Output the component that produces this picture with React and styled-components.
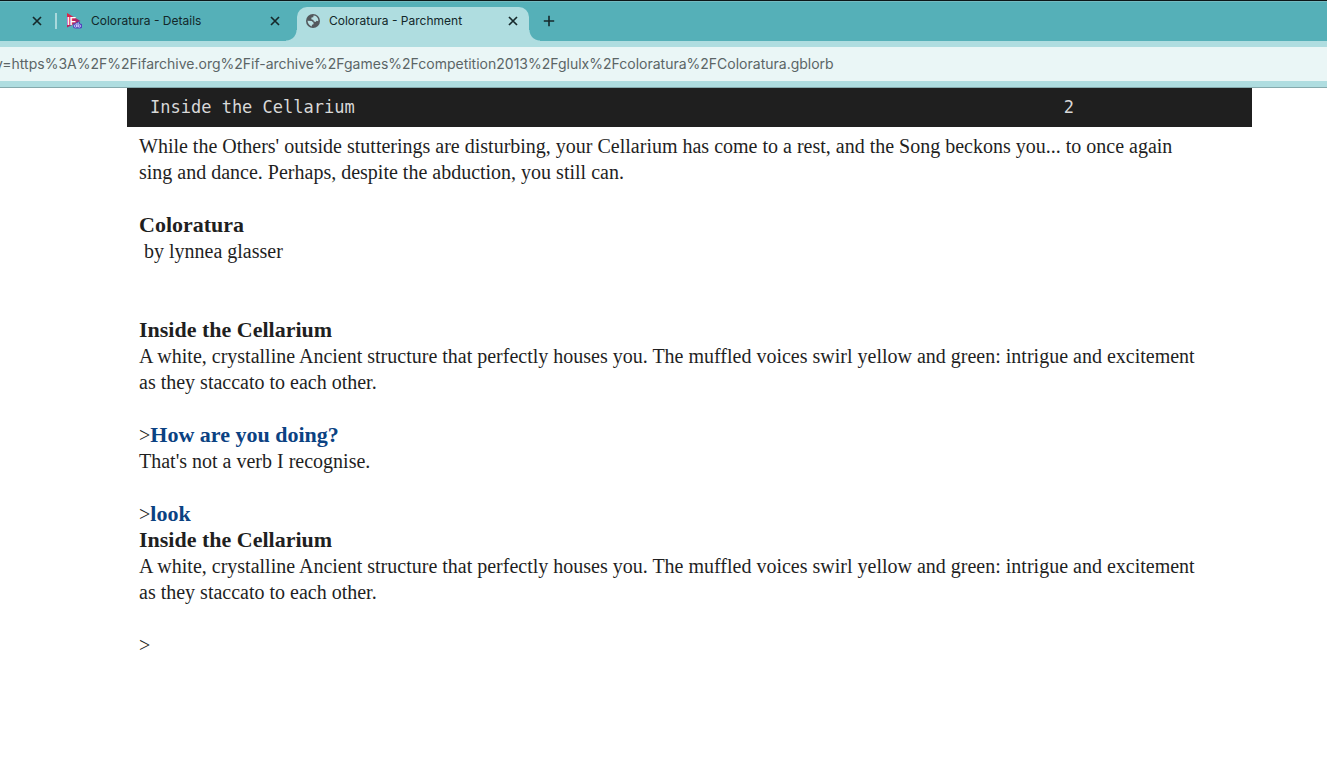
import React from "react";
import styled, { createGlobalStyle } from "styled-components";

const GlobalStyle = createGlobalStyle`
  * { box-sizing: border-box; }
  body {
    margin: 0;
    background: #fff;
    color: #1f1f1f;
    overflow-x: hidden;
  }
`;

const uiFont = `Inter, "Liberation Sans", sans-serif`;

const TabStrip = styled.header`
  display: flex;
  align-items: flex-end;
  height: 41px;
  padding-top: 6px;
  background: #55b0b8;
  border-top: 1px solid #0c1718;
  box-shadow: inset 0 1px #74bbc1;
  overflow: hidden;
  font: 12px/16px ${uiFont};
`;

const TabItem = styled.div`
  position: relative;
  display: flex;
  align-items: center;
  flex: none;
  width: ${(p) => p.$width};
  height: 34px;
  padding: 0 8px 6px 9px;
  color: #12282a;
  background: ${(p) => (p.$active ? "#afdde0" : "transparent")};
  border-radius: 10px 10px 0 0;

  &::before,
  &::after {
    content: ${(p) => (p.$active ? '""' : "none")};
    position: absolute;
    bottom: 0;
    width: 11px;
    height: 11px;
  }
  &::before {
    left: -11px;
    background: radial-gradient(circle at 0 0, transparent 10px, #afdde0 11px);
  }
  &::after {
    right: -11px;
    background: radial-gradient(circle at 100% 0, transparent 10px, #afdde0 11px);
  }
`;

const TabLink = styled.a`
  display: flex;
  align-items: center;
  gap: 9px;
  flex: 1;
  color: inherit;
  text-decoration: none;
  white-space: nowrap;
`;

const Divider = styled.span`
  flex: none;
  width: 2px;
  height: 16px;
  margin-bottom: 12px;
  background: #a9d9dc;
`;

const IconButton = styled.button`
  display: grid;
  place-items: center;
  flex: none;
  width: 16px;
  height: 16px;
  margin: ${(p) => p.$margin || 0};
  padding: 0;
  border: 0;
  background: none;
  color: #16292b;
`;

const Toolbar = styled.div`
  height: 47px;
  padding: 6px 0;
  background: #afdde0;
  border-bottom: 1px solid #85aaad;
  overflow: hidden;
`;

const AddressBar = styled.div`
  display: flex;
  height: 34px;
  background: #eaf6f6;
`;

const Address = styled.input`
  flex: 1;
  min-width: 0;
  margin-left: -5px;
  padding: 0;
  border: 0;
  outline: 0;
  background: none;
  color: #5b6566;
  font: 14px/20px ${uiFont};
`;

const Story = styled.main`
  margin: 0 75px 0 127px;
`;

const StatusLine = styled.div`
  display: flex;
  justify-content: space-between;
  padding: 6px 178px 7px 23px;
  background: #1f1f1f;
  color: #d8d8d8;
  font: 17px/26px "DejaVu Sans Mono", monospace;
`;

const Transcript = styled.div`
  display: flex;
  flex-direction: column;
  gap: 27px;
  padding: 6px 48px 12px 12px;
  font: 20px/26px "Liberation Serif", serif;
`;

const Passage = styled.p`
  margin: 0;
  margin-bottom: ${(p) => (p.$spaced ? "26px" : 0)};
  white-space: pre-wrap;
`;

const Title = styled.strong`
  display: block;
  font-size: 22px;
`;

const Command = styled.strong`
  color: #0b4282;
  font-size: 22px;
  line-height: 22px;
`;

const CommandInput = styled.input`
  flex: 1;
  min-width: 0;
  padding: 0;
  border: 0;
  outline: 0;
  background: none;
  color: #0b4282;
  font: inherit;
  font-weight: 700;
`;

const Prompt = styled.label`
  display: flex;
`;

function CloseIcon() {
  return (
    <svg width="10" height="10" viewBox="0 0 10 10" stroke="currentColor" strokeWidth="1.7">
      <path d="M1 1l8 8M9 1L1 9" />
    </svg>
  );
}

function PlusIcon() {
  return (
    <svg width="12" height="12" viewBox="0 0 12 12" stroke="currentColor" strokeWidth="1.6">
      <path d="M6 .8v10.4M.8 6h10.4" />
    </svg>
  );
}

function IfdbIcon() {
  return (
    <svg width="16" height="16" viewBox="0 0 16 16" aria-hidden="true">
      <defs>
        <linearGradient id="flag" x1="0" y1="0" x2="1" y2="1">
          <stop offset="0" stopColor="#ea2440" />
          <stop offset="0.5" stopColor="#bb2462" />
          <stop offset="1" stopColor="#642a9c" />
        </linearGradient>
      </defs>
      <path d="M1 0L14.500 8 1 14.500z" fill="url(#flag)" />
      <text x="1" y="12" fill="#fff" fontSize="10" fontWeight="700" fontFamily="Liberation Sans, sans-serif">IF</text>
      <path d="M8.500 10.500h1.500l1-1.500h1v1.500h1V9h1v1.500q2.500 0 2.500 2.500t-2.500 2.500H9.500q-2.500 0-2.500-2.500T8.500 10.500z" fill="#5145bd" />
      <g fill="none" stroke="#d9d8ff" strokeWidth=".8">
        <circle cx="9.500" cy="13" r="1.200" />
        <circle cx="13.300" cy="13" r="1.200" />
        <path d="M10.800 10v4.200M12.100 10v4.200" />
      </g>
    </svg>
  );
}

function GlobeIcon() {
  return (
    <svg width="14" height="14" viewBox="0 0 14 14" aria-hidden="true">
      <circle cx="7" cy="7" r="7" fill="#53595d" />
      <path
        d="M7.500 1.500Q11 1.800 12.200 5.200L12.300 7.200 10.500 6.800 9.600 8 7.600 7.300 7.500 6 5.300 5.200 5.500 3.500 7.300 3.300zM1.500 6.700L5.700 6.900 7.600 8.700 7.500 10.200 6 10.800 5.700 12.400Q2 11 1.500 6.700z"
        fill="#b8e0e3"
      />
    </svg>
  );
}

function Close({ title, margin }) {
  return (
    <IconButton type="button" aria-label={`Close ${title}`} $margin={margin}>
      <CloseIcon />
    </IconButton>
  );
}

const intro =
  "While the Others' outside stutterings are disturbing, your Cellarium has come to a rest, and the Song " +
  "beckons you... to once again sing and dance. Perhaps, despite the abduction, you still can.";

const roomDescription =
  "A white, crystalline Ancient structure that perfectly houses you. The muffled voices swirl yellow and " +
  "green: intrigue and excitement as they staccato to each other.";

function Room() {
  return (
    <>
      <Title>Inside the Cellarium</Title>
      {roomDescription}
    </>
  );
}

export default function App() {
  return (
    <>
      <GlobalStyle />
      <TabStrip>
        <Close title="tab" margin="0 10px 12px 29px" />
        <Divider />
        <TabItem $width="240px">
          <TabLink href="#details">
            <IfdbIcon />
            Coloratura - Details
          </TabLink>
          <Close title="Coloratura - Details" margin="0 6px 0 0" />
        </TabItem>
        <TabItem $width="232px" $active>
          <TabLink href="#parchment">
            <GlobeIcon />
            Coloratura - Parchment
          </TabLink>
          <Close title="Coloratura - Parchment" />
        </TabItem>
        <IconButton type="button" aria-label="New tab" $margin="0 0 12px 12px">
          <PlusIcon />
        </IconButton>
      </TabStrip>
      <Toolbar>
        <AddressBar>
          <Address
            aria-label="Address"
            defaultValue="y=https%3A%2F%2Fifarchive.org%2Fif-archive%2Fgames%2Fcompetition2013%2Fglulx%2Fcoloratura%2FColoratura.gblorb"
          />
        </AddressBar>
      </Toolbar>
      <Story>
        <StatusLine>
          <span>Inside the Cellarium</span>
          <span>2</span>
        </StatusLine>
        <Transcript>
          <Passage>{intro}</Passage>
          <Passage $spaced>
            <Title>Coloratura</Title>
            {" by lynnea glasser"}
          </Passage>
          <Passage>
            <Room />
          </Passage>
          <Passage>
            {">"}
            <Command>How are you doing?</Command>
            {"\nThat's not a verb I recognise."}
          </Passage>
          <Passage>
            {">"}
            <Command>look</Command>
            <Room />
          </Passage>
          <Prompt>
            {">"}
            <CommandInput aria-label="Command" />
          </Prompt>
        </Transcript>
      </Story>
    </>
  );
}
